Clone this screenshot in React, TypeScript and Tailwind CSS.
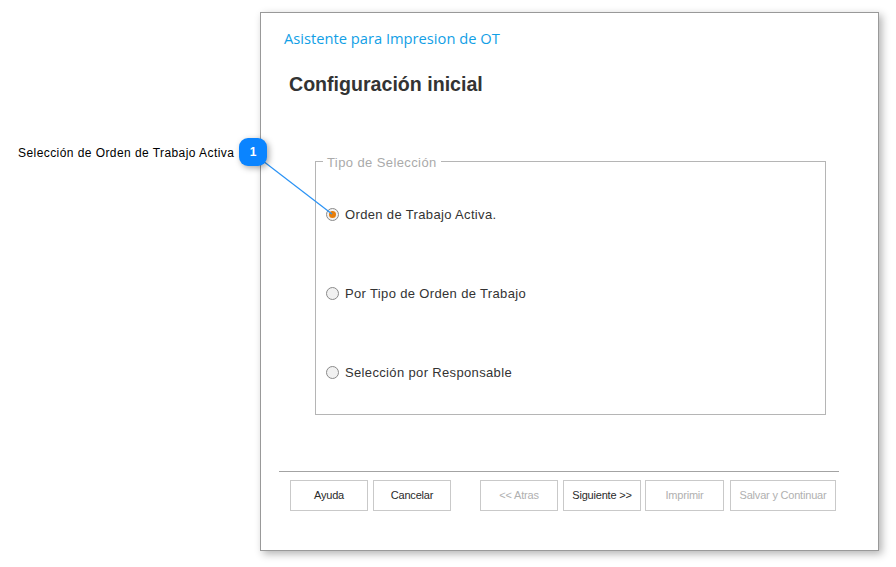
const BUTTONS_LEFT = [
  { label: "Ayuda", disabled: false },
  { label: "Cancelar", disabled: false },
];

const OPTIONS = [
  { label: "Orden de Trabajo Activa.", checked: true },
  { label: "Por Tipo de Orden de Trabajo", checked: false },
  { label: "Selección por Responsable", checked: false },
];

const WizardButton = ({ label, disabled, width = "w-[78px]", className = "" }: { label: string; disabled?: boolean; width?: string; className?: string }) => (
  <button
    className={`${width} ${className} h-[31px] border border-[#c9c9c9] bg-white text-[11px] tracking-[-0.2px] ${disabled ? "text-[#b0b0b0]" : "text-[#2a2a2a]"}`}
  >
    {label}
  </button>
);

const Radio = ({ label, checked }: { label: string; checked: boolean }) => (
  <div className="flex items-center h-[20px]">
    <span className="w-[13px] h-[13px] rounded-full border border-[#8a8a8a] bg-[#f1f1f1] flex items-center justify-center">
      {checked && <span className="w-[7px] h-[7px] rounded-full bg-[#e67e0c]" />}
    </span>
    <span className="ml-[6px] pt-[2px] text-[13px] tracking-[0.35px] text-[#333333]">{label}</span>
  </div>
);

export default function App() {
  return (
    <div className="relative w-[896px] h-[567px] overflow-hidden bg-white font-['Liberation_Sans',sans-serif]">
      <div className="flex items-start pt-[12px]">
        {/* callout label column */}
        <div className="w-[260px] shrink-0 pt-[132px] pl-[18px]">
          <span className="block leading-[18px] text-[12px] tracking-[0.43px] text-black whitespace-nowrap">Selección de Orden de Trabajo Activa</span>
        </div>

        <div className="w-[619px] h-[539px] border border-[#999999] bg-white shadow-[3px_3px_8px_rgba(0,0,0,0.3)] flex flex-col">
          <div className="pl-[23px] pt-[15px] h-[21px] box-content font-['Open_Sans',sans-serif] text-[14.7px] leading-[21px] text-[#12a0e6]">
            Asistente para Impresion de OT
          </div>

          <h1 className="pl-[28px] mt-[23px] text-[19.6px] leading-[24px] font-bold text-[#333333]">Configuración inicial</h1>

          <fieldset className="ml-[54px] mt-[57px] w-[511px] h-[262px] border border-[#b5b5b5] px-[10px]">
            <legend className="ml-[-3px] px-[4px] translate-y-[2px] text-[13px] leading-[16px] tracking-[0.4px] text-[#aaaaaa]">Tipo de Selección</legend>
            <div className="flex flex-col gap-[59px] pt-[35px]">
              {OPTIONS.map((o) => (
                <Radio key={o.label} label={o.label} checked={o.checked} />
              ))}
            </div>
          </fieldset>

          <div className="ml-[18px] mt-[56px] w-[560px] border-t border-[#a3a3a3]" />

          <div className="flex mt-[8px] pl-[29px]">
            <div className="flex gap-[5px]">
              {BUTTONS_LEFT.map((b) => (
                <WizardButton key={b.label} label={b.label} />
              ))}
            </div>
            <div className="flex ml-[29px]">
              <WizardButton label="<< Atras" disabled />
              <WizardButton label="Siguiente >>" className="ml-[5px]" />
              <WizardButton label="Imprimir" disabled width="w-[79px]" className="ml-[4px]" />
              <WizardButton label="Salvar y Continuar" disabled width="w-[106px]" className="ml-[6px]" />
            </div>
          </div>
        </div>
      </div>

      {/* callout leader and number badge */}
      <svg className="absolute left-0 top-0 pointer-events-none" width="896" height="567">
        <line x1="263" y1="161" x2="332" y2="214" stroke="#2b93f5" strokeWidth="1.2" />
      </svg>
      <div className="absolute left-[239px] top-[138px] w-[28px] h-[28px] rounded-[9px] bg-[#0a84ff] text-white text-[12px] font-bold flex items-center justify-center shadow-[2px_2px_6px_rgba(0,0,0,0.35)]">
        1
      </div>
    </div>
  );
}
